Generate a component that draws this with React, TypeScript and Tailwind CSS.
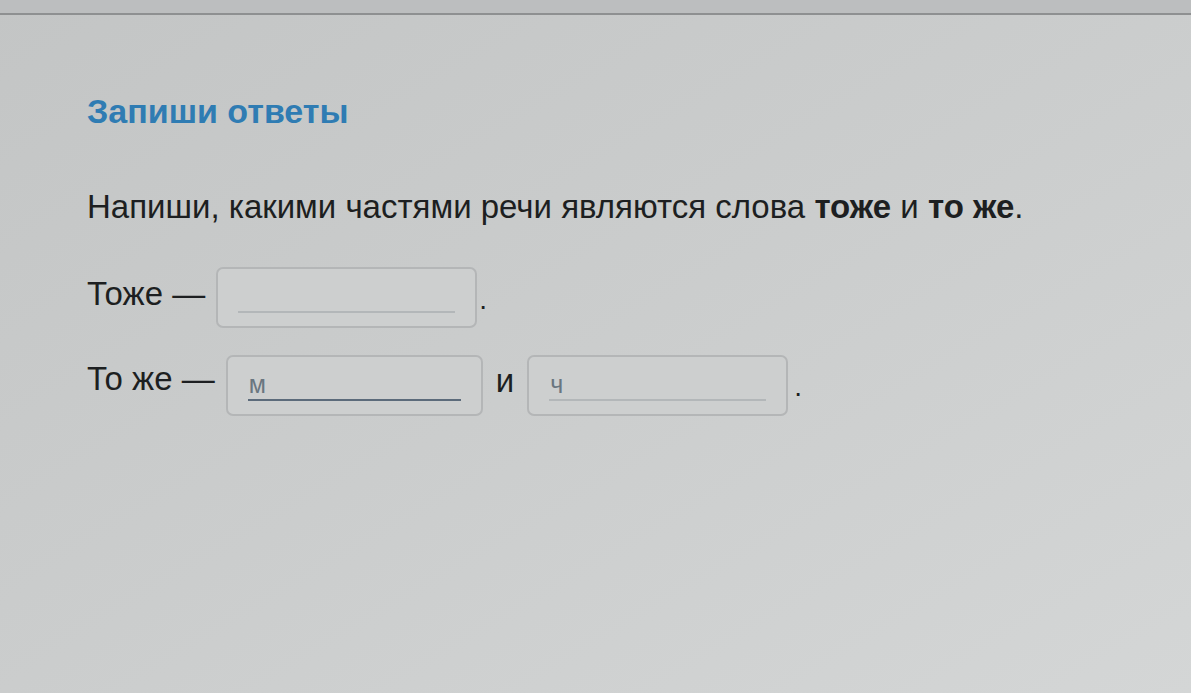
export default function App() {
  return (
    <div className="min-h-[693px] w-full bg-linear-to-br from-[#c3c5c5] via-[#cbcdcd] to-[#d4d6d6] font-['Liberation_Sans',Arial,sans-serif]">
      {/* top strip */}
      <div className="h-[15px] border-b-2 border-[#8e9091] bg-[#bcbebf]" />

      <div className="pl-[87px]">
        <h1 className="mt-[76px] text-[34px] font-bold leading-[40px] text-[#2f7cb3]">Запиши ответы</h1>

        <p className="mt-[58px] text-[33px] leading-[36px] text-[#1d1f21]">
          Напиши, какими частями речи являются слова <b>тоже</b> и <b>то же</b>.
        </p>

        <div className="mt-[42px] flex h-[60px] items-center text-[33px] leading-[36px] text-[#1d1f21]">
          <span className="mr-[11px] -translate-y-[3px]">Тоже —</span>
          <AnswerBox width={261} />
          <span className="ml-[2px] translate-y-[3px] text-[28px]">.</span>
        </div>

        <div className="mt-[28px] flex h-[61px] items-center text-[33px] leading-[36px] text-[#1d1f21]">
          <span className="mr-[11px] -translate-y-[7px]">То же —</span>
          <AnswerBox width={257} value="м" dark />
          <span className="ml-[13px] mr-[13px] -translate-y-[5px]">и</span>
          <AnswerBox width={261} value="ч" />
          <span className="ml-[6px] translate-y-[1px] text-[28px]">.</span>
        </div>
      </div>
    </div>
  );
}

function AnswerBox({ width, value, dark }: { width: number; value?: string; dark?: boolean }) {
  return (
    <div
      className="flex h-[61px] items-end rounded-[7px] border-2 border-[#b4b6b7] bg-[#cdcfcf] pl-[20px] pr-[20px] pb-[13px]"
      style={{ width }}
    >
      <div className={`w-full border-b-2 ${dark ? 'border-[#5c6b7b]' : 'border-[#b3b7b9]'}`}>
        <span className="block h-[30px] pl-[1px] text-[25px] leading-[30px] text-[#6a7680]">{value ?? ''}</span>
      </div>
    </div>
  );
}
